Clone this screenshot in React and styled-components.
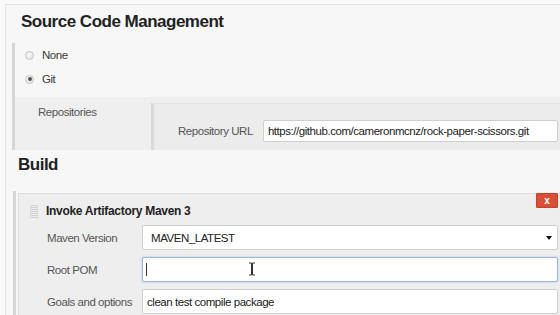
import React from 'react'
import styled, { createGlobalStyle } from 'styled-components'

const Global = createGlobalStyle`
  html, body {
    margin: 0;
    padding: 0;
    background: #fafafa;
    overflow: hidden;
  }
  body {
    font-family: 'Liberation Sans', Arial, sans-serif;
    color: #333;
  }
`

const Frame = styled.div`
  display: flex;
  flex-direction: column;
  margin: 4px 0 0 5px;
  height: 310px;
  overflow: hidden;
  border-top: 1px solid #e2e2e2;
  border-left: 1px solid #e2e2e2;
  background: #f7f7f7;
`

const Heading = styled.h2`
  margin: 0;
  padding-left: ${p => p.$indent}px;
  padding-top: ${p => p.$top}px;
  font-size: 17px;
  line-height: 20px;
  font-weight: bold;
  letter-spacing: -0.5px;
  color: #222;
`

const Section = styled.div`
  display: flex;
  flex-direction: column;
  flex: ${p => (p.$fill ? 1 : 'none')};
  margin-left: ${p => p.$left}px;
  margin-top: ${p => p.$top}px;
  border-left: 3px solid #d6d6d6;
`

const RadioRow = styled.label`
  display: flex;
  align-items: center;
  gap: 8px;
  height: 24px;
  padding-left: 10px;
  font-size: 11.5px;
  letter-spacing: -0.45px;
  color: #3a3a3a;
`

const Radio = styled.span`
  width: 9px;
  height: 9px;
  border-radius: 50%;
  border: 1px solid #c4c4c4;
  background: radial-gradient(circle at 40% 35%, #fafafa, #dedede);
  display: flex;
  align-items: center;
  justify-content: center;
  box-sizing: border-box;

  &::after {
    content: '';
    width: 4px;
    height: 4px;
    border-radius: 50%;
    background: ${p => (p.$checked ? '#555' : 'transparent')};
  }
`

const Repos = styled.div`
  display: flex;
  margin-top: 6px;
  background: #efefef;
`

const ReposLabel = styled.div`
  width: 136px;
  flex-shrink: 0;
  box-sizing: border-box;
  padding: 8px 0 0 23px;
  font-size: 11.5px;
  line-height: 14px;
  letter-spacing: -0.45px;
  color: #555;
`

const ReposBody = styled.div`
  flex: 1;
  display: flex;
  align-items: center;
  gap: 10px;
  margin-top: 6px;
  padding: 16px 2px 8px 24px;
  border-left: 3px solid #dadada;
  border-top: 1px solid #e2e2e2;
  background: #ececec;
`

const FieldLabel = styled.span`
  flex-shrink: 0;
  width: ${p => (p.$width ? `${p.$width}px` : 'auto')};
  font-size: 11.5px;
  letter-spacing: -0.45px;
  color: #555;
`

const Input = styled.input`
  flex: 1;
  min-width: 0;
  height: ${p => p.$h || 25}px;
  box-sizing: border-box;
  margin: 0;
  padding: 0 ${p => p.$pad || 4}px;
  border: 1px solid ${p => (p.$focus ? '#9ab8dd' : '#cfcfcf')};
  border-radius: 2px;
  background: #fff;
  outline: none;
  box-shadow: ${p => (p.$focus ? '0 0 2px rgba(110,155,210,0.6)' : 'none')};
  font-family: 'Liberation Sans', Arial, sans-serif;
  font-size: 11.5px;
  letter-spacing: -0.45px;
  color: #222;
`

const Block = styled.div`
  position: relative;
  flex: 1;
  margin-left: 2px;
  margin-top: 2px;
  border-top: 1px solid #dcdcdc;
  border-left: 1px solid #dcdcdc;
  background: #eeeeee;
`

const BlockHeader = styled.div`
  display: flex;
  align-items: center;
  gap: 8px;
  padding: 10px 0 4px 11px;
  line-height: 15px;
  font-size: 12px;
  font-weight: bold;
  letter-spacing: -0.3px;
  color: #222;
`

const DeleteButton = styled.button`
  position: absolute;
  top: -1px;
  right: 2px;
  width: 22px;
  height: 15px;
  padding: 0;
  border: 1px solid #c2412c;
  border-radius: 1px;
  background: #d94f35;
  color: #fff;
  font-family: 'Liberation Sans', Arial, sans-serif;
  font-size: 10px;
  font-weight: bold;
  line-height: 12px;
`

const Rows = styled.div`
  display: flex;
  flex-direction: column;
  gap: 7px;
  margin-top: 2px;
  padding: 0 2px 0 28px;
`

const Row = styled.div`
  display: flex;
  align-items: center;
`

const Select = styled.div`
  flex: 1;
  display: flex;
  align-items: center;
  justify-content: space-between;
  height: 25px;
  box-sizing: border-box;
  padding: 0 5px 0 8px;
  border: 1px solid #cfcfcf;
  border-radius: 2px;
  background: #fff;
  font-size: 11.5px;
  letter-spacing: -0.45px;
  color: #222;
`

const Arrow = styled.span`
  width: 0;
  height: 0;
  border-left: 3px solid transparent;
  border-right: 3px solid transparent;
  border-top: 4px solid #111;
`

const FieldWrap = styled.div`
  position: relative;
  flex: 1;
  display: flex;
`

const Caret = styled.span`
  position: absolute;
  left: 4px;
  top: 6px;
  width: 1px;
  height: 13px;
  background: #333;
`

const Pointer = styled.svg`
  position: absolute;
  left: 106px;
  top: 5px;
`

const Grip = () => (
  <svg width="8" height="14" viewBox="0 0 8 14">
    {[0, 2, 4, 6, 8, 10, 12].map(y => (
      <rect key={y} x="0" y={y} width="8" height="1" fill="#d0d0d0" />
    ))}
    <rect x="0" y="0" width="1" height="14" fill="#dcdcdc" />
    <rect x="7" y="0" width="1" height="14" fill="#dcdcdc" />
  </svg>
)

export default function App() {
  return (
    <>
      <Global />
      <Frame>
        <Heading $indent={15} $top={7}>Source Code Management</Heading>

        <Section $left={6} $top={11}>
          <RadioRow>
            <Radio />
            None
          </RadioRow>
          <RadioRow>
            <Radio $checked />
            Git
          </RadioRow>
          <Repos>
            <ReposLabel>Repositories</ReposLabel>
            <ReposBody>
              <FieldLabel>Repository URL</FieldLabel>
              <Input $h={22} readOnly value="https://github.com/cameronmcnz/rock-paper-scissors.git" />
            </ReposBody>
          </Repos>
        </Section>

        <Heading $indent={12} $top={5}>Build</Heading>

        <Section $left={7} $top={16} $fill>
          <Block>
            <DeleteButton>x</DeleteButton>
            <BlockHeader>
              <Grip />
              Invoke Artifactory Maven 3
            </BlockHeader>
            <Rows>
              <Row>
                <FieldLabel $width={95}>Maven Version</FieldLabel>
                <Select>
                  MAVEN_LATEST
                  <Arrow />
                </Select>
              </Row>
              <Row>
                <FieldLabel $width={95}>Root POM</FieldLabel>
                <FieldWrap>
                  <Input $focus readOnly value="" />
                  <Caret />
                  <Pointer width="8" height="15" viewBox="0 0 8 15">
                    <path d="M1 1h2.5v12H1M7 1H4.5v12H7" fill="none" stroke="#fff" strokeWidth="2.2" />
                    <path d="M1 1h2.5v12H1M7 1H4.5v12H7" fill="none" stroke="#333" strokeWidth="1" />
                  </Pointer>
                </FieldWrap>
              </Row>
              <Row>
                <FieldLabel $width={95}>Goals and options</FieldLabel>
                <Input readOnly value="clean test compile package" />
              </Row>
            </Rows>
          </Block>
        </Section>
      </Frame>
    </>
  )
}
